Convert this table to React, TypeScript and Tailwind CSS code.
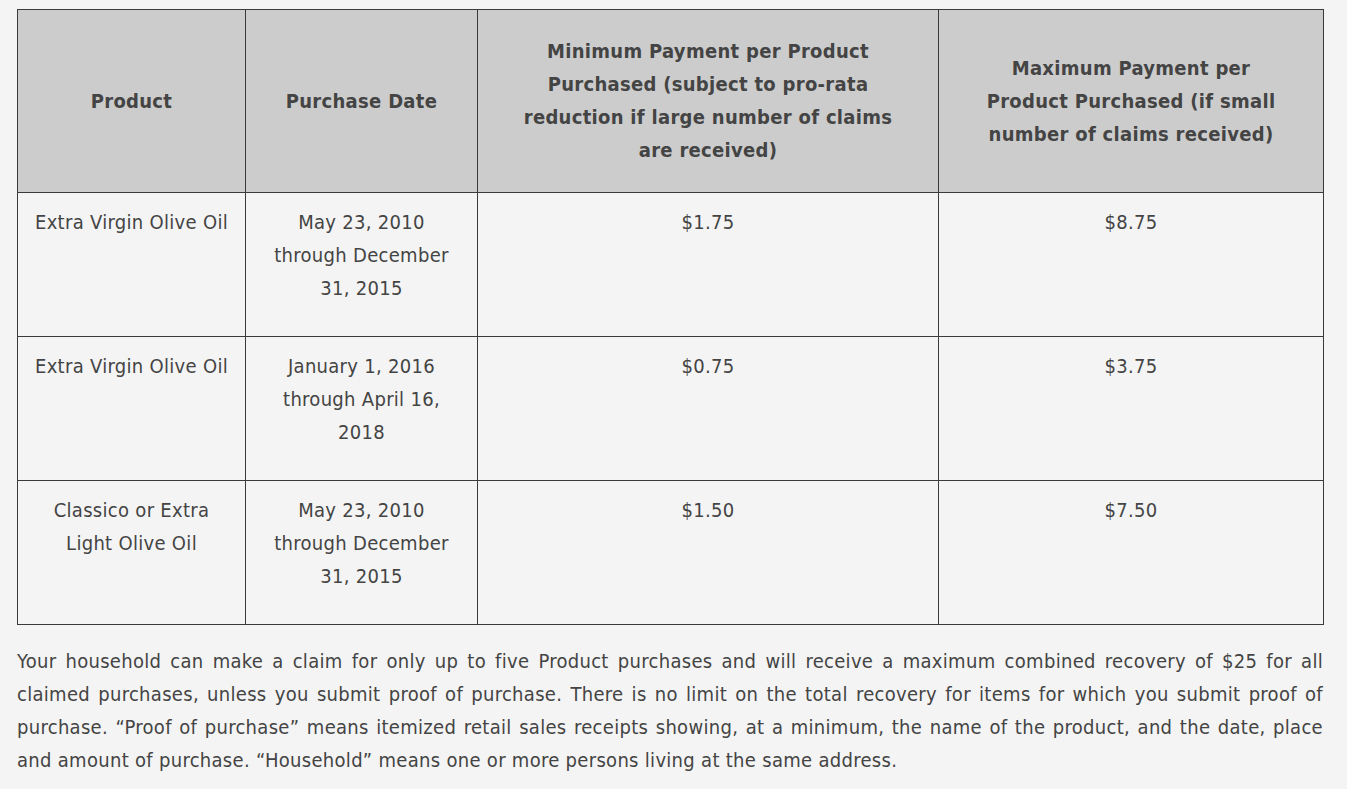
export default function App() {
  const rows = [
    {
      product: "Extra Virgin Olive Oil",
      date: "May 23, 2010 through December 31, 2015",
      min: "$1.75",
      max: "$8.75",
    },
    {
      product: "Extra Virgin Olive Oil",
      date: "January 1, 2016 through April 16, 2018",
      min: "$0.75",
      max: "$3.75",
    },
    {
      product: "Classico or Extra Light Olive Oil",
      date: "May 23, 2010 through December 31, 2015",
      min: "$1.50",
      max: "$7.50",
    },
  ]

  return (
    <div
      className="min-h-screen bg-[#f4f4f4] text-[#444444] text-[20px] leading-[33px] tracking-[0.3px] px-[17px] pt-[9px]"
      style={{ fontFamily: '"DejaVu Sans Condensed", Tahoma, "DejaVu Sans", sans-serif' }}
    >
      <table className="w-[1306px] table-fixed border-collapse border border-[#3a3a3a]">
        <colgroup>
          <col className="w-[228px]" />
          <col className="w-[232px]" />
          <col className="w-[461px]" />
          <col className="w-[385px]" />
        </colgroup>
        <thead>
          <tr className="bg-[#cccccc] h-[183px]">
            <th className="border border-[#3a3a3a] px-[14px] py-[25px] align-middle font-bold">Product</th>
            <th className="border border-[#3a3a3a] px-[14px] py-[25px] align-middle font-bold">Purchase Date</th>
            <th className="border border-[#3a3a3a] px-[36px] py-[25px] align-middle font-bold">
              Minimum Payment per Product Purchased (subject to pro-rata reduction if large number of claims are received)
            </th>
            <th className="border border-[#3a3a3a] px-[36px] py-[25px] align-middle font-bold">
              Maximum Payment per Product Purchased (if small number of claims received)
            </th>
          </tr>
        </thead>
        <tbody>
          {rows.map((r, i) => (
            <tr key={i} className="h-[144px]">
              <td className="border border-[#3a3a3a] px-[14px] pt-[13px] pb-[31px] align-top text-center">{r.product}</td>
              <td className="border border-[#3a3a3a] px-[22px] pt-[13px] pb-[31px] align-top text-center">{r.date}</td>
              <td className="border border-[#3a3a3a] px-[14px] pt-[13px] pb-[31px] align-top text-center">{r.min}</td>
              <td className="border border-[#3a3a3a] px-[14px] pt-[13px] pb-[31px] align-top text-center">{r.max}</td>
            </tr>
          ))}
        </tbody>
      </table>
      <p className="w-[1306px] mt-[20px] text-justify">
        Your household can make a claim for only up to five Product purchases and will receive a maximum combined
        recovery of $25 for all claimed purchases, unless you submit proof of purchase. There is no limit on the total
        recovery for items for which you submit proof of purchase. “Proof of purchase” means itemized retail sales
        receipts showing, at a minimum, the name of the product, and the date, place and amount of purchase.
        “Household” means one or more persons living at the same address.
      </p>
    </div>
  )
}
